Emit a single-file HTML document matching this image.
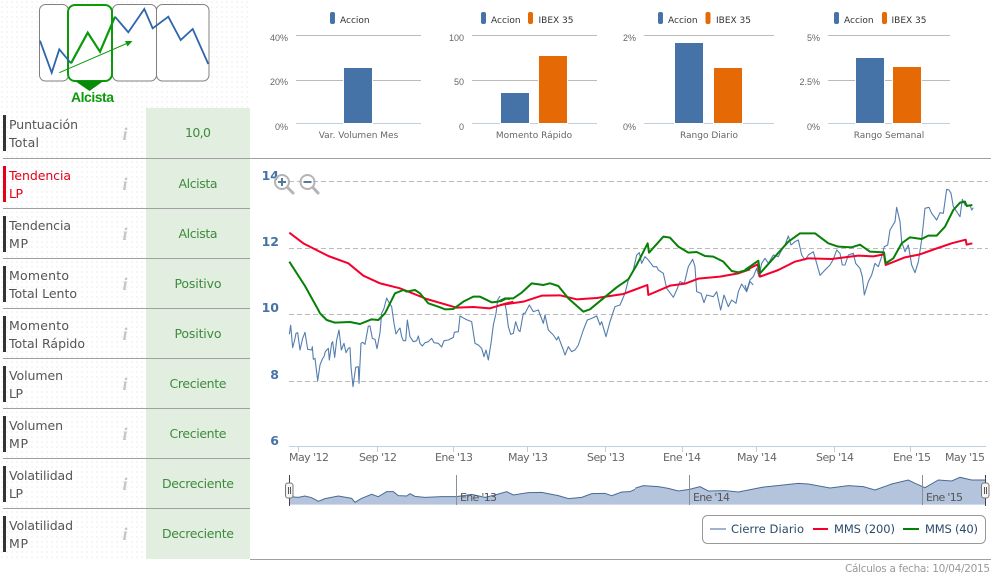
<!DOCTYPE html>
<html lang="es"><head><meta charset="utf-8"><title>Análisis</title>
<style>
html,body{margin:0;padding:0;background:#fff;width:995px;height:579px;overflow:hidden}
svg{display:block}
text{font-family:"DejaVu Sans",sans-serif}
.r{font-size:12.5px;fill:#555}
.v{font-size:12.5px;fill:#3d8a3d;text-anchor:middle}
.i{font-family:"Liberation Serif",serif;font-style:italic;font-weight:bold;font-size:18px;fill:#c6c6c6;text-anchor:middle}
.a{font-family:"Liberation Sans",sans-serif;font-size:9px;fill:#666;text-anchor:end}
.c{font-size:9px;fill:#666;text-anchor:middle}
.l{font-size:9px;fill:#333}
.y{font-size:12.5px;font-weight:bold;fill:#4572a7;text-anchor:end}
.x{font-size:11px;fill:#666}
.n{font-size:11px;fill:#555}
.g{stroke:#bbb;stroke-width:1;fill:none}
.d{stroke:#bbb;stroke-width:1;stroke-dasharray:5 3;fill:none}
.b{fill:#4572a7;stroke:#fff;stroke-width:1}
.o{fill:#e56a05;stroke:#fff;stroke-width:1}
.t{stroke:#c0d0e0;stroke-width:1;fill:none}
.zb{fill:none;stroke:#4572a7;stroke-width:1.1;vector-effect:non-scaling-stroke;stroke-linejoin:round;opacity:.92}
.zr{fill:none;stroke:#f5002d;stroke-width:2;vector-effect:non-scaling-stroke;stroke-linejoin:round}
.zg{fill:none;stroke:#078007;stroke-width:2;vector-effect:non-scaling-stroke;stroke-linejoin:round}
</style></head>
<body>
<svg width="995" height="579" viewBox="0 0 995 579" xmlns="http://www.w3.org/2000/svg">
<defs><pattern id="dots" width="5" height="5" patternUnits="userSpaceOnUse"><rect x="1" y="1" width="2" height="2" fill="#f6f6f6"/></pattern></defs>
<rect width="995" height="579" fill="#fff"/>
<rect x="0" y="0" width="250" height="559" fill="url(#dots)"/>

<!-- logo -->
<g fill="#fff" stroke="#808080" stroke-width="1">
<rect x="39.5" y="4.5" width="29" height="76.5" rx="6"/>
<rect x="112.5" y="4.5" width="44" height="76.5" rx="6"/>
<rect x="156.5" y="4.5" width="52.5" height="76.5" rx="6"/>
</g>
<rect x="68" y="5" width="44" height="76" rx="7" fill="#fff" stroke="#0a9a0a" stroke-width="2"/>
<polyline points="40,40.7 51.7,72.7 59.3,49.3 71,63.3" fill="none" stroke="#2e65ac" stroke-width="1.8"/>
<polyline points="115,16.7 128.3,32.3 144.3,9 152.7,28.3 168.3,16.7 180.7,40 192.7,29 208.3,64" fill="none" stroke="#2e65ac" stroke-width="1.8"/>
<polyline points="71,63.3 87.7,32.7 100,51.7 115,16.7" fill="none" stroke="#0a9a0a" stroke-width="2.2"/>
<line x1="59.3" y1="72.7" x2="129" y2="42.5" stroke="#0a9a0a" stroke-width="1"/>
<polygon points="132.5,41 125,41 127.5,46.5" fill="#0a9a0a"/>
<polygon points="75,81 103.500,81 89.500,91" fill="#0a8a0a"/>
<text x="71" y="102" style="font-family:'Liberation Sans',sans-serif;font-weight:bold;font-size:14px;fill:#0a9a0a" textLength="43">Alcista</text>

<!-- row rules -->
<g fill="#e2efe0">
<rect x="146" y="108" width="104" height="50"/><rect x="146" y="159" width="104" height="49"/><rect x="146" y="209" width="104" height="49"/><rect x="146" y="259" width="104" height="49"/><rect x="146" y="309" width="104" height="49"/><rect x="146" y="359" width="104" height="49"/><rect x="146" y="409" width="104" height="49"/><rect x="146" y="459" width="104" height="49"/><rect x="146" y="509" width="104" height="50"/>
</g>
<g stroke="#a0a0a0" stroke-width="1">
<line x1="3" y1="158.500" x2="991" y2="158.500"/>
<line x1="3" y1="208.500" x2="250" y2="208.500"/><line x1="3" y1="258.500" x2="250" y2="258.500"/><line x1="3" y1="308.500" x2="250" y2="308.500"/><line x1="3" y1="358.500" x2="250" y2="358.500"/><line x1="3" y1="408.500" x2="250" y2="408.500"/><line x1="3" y1="458.500" x2="250" y2="458.500"/><line x1="3" y1="508.500" x2="250" y2="508.500"/>
<line x1="250" y1="559.500" x2="991" y2="559.500"/>
</g>
<g fill="#333">
<rect x="3" y="115" width="3" height="36"/>
<rect x="3" y="166" width="3" height="36" fill="#e2001a"/>
<rect x="3" y="216" width="3" height="36"/><rect x="3" y="266" width="3" height="36"/><rect x="3" y="316" width="3" height="36"/><rect x="3" y="366" width="3" height="36"/><rect x="3" y="416" width="3" height="36"/><rect x="3" y="466" width="3" height="36"/><rect x="3" y="516" width="3" height="36"/>
</g>
<text class="r" x="9" y="129" textLength="69">Puntuación</text><text class="r" x="9" y="147" textLength="30">Total</text>
<text class="r" x="9" y="180" textLength="62" style="fill:#e2001a">Tendencia</text><text class="r" x="9" y="198" textLength="14" style="fill:#e2001a">LP</text>
<text class="r" x="9" y="230" textLength="62">Tendencia</text><text class="r" x="9" y="248" textLength="19">MP</text>
<text class="r" x="9" y="280" textLength="60">Momento</text><text class="r" x="9" y="298" textLength="68">Total Lento</text>
<text class="r" x="9" y="330" textLength="60">Momento</text><text class="r" x="9" y="348" textLength="76">Total Rápido</text>
<text class="r" x="9" y="380" textLength="54">Volumen</text><text class="r" x="9" y="398" textLength="14">LP</text>
<text class="r" x="9" y="430" textLength="54">Volumen</text><text class="r" x="9" y="448" textLength="19">MP</text>
<text class="r" x="9" y="480" textLength="64">Volatilidad</text><text class="r" x="9" y="498" textLength="14">LP</text>
<text class="r" x="9" y="530" textLength="64">Volatilidad</text><text class="r" x="9" y="548" textLength="19">MP</text>
<text class="i" x="125" y="140">i</text><text class="i" x="125" y="190">i</text><text class="i" x="125" y="240">i</text><text class="i" x="125" y="290">i</text><text class="i" x="125" y="340">i</text><text class="i" x="125" y="390">i</text><text class="i" x="125" y="440">i</text><text class="i" x="125" y="490">i</text><text class="i" x="125" y="540">i</text>
<text class="v" x="198" y="137" textLength="26">10,0</text>
<text class="v" x="198" y="188" textLength="39">Alcista</text>
<text class="v" x="198" y="238" textLength="39">Alcista</text>
<text class="v" x="198" y="288" textLength="47">Positivo</text>
<text class="v" x="198" y="338" textLength="47">Positivo</text>
<text class="v" x="198" y="388" textLength="57">Creciente</text>
<text class="v" x="198" y="438" textLength="57">Creciente</text>
<text class="v" x="198" y="488" textLength="72">Decreciente</text>
<text class="v" x="198" y="538" textLength="72">Decreciente</text>

<!-- bar chart 1 -->
<line class="g" x1="296" y1="35.500" x2="421" y2="35.500"/><line class="g" x1="296" y1="80.500" x2="421" y2="80.500"/><line class="t" x1="296" y1="123.500" x2="421" y2="123.500"/>
<rect class="b" x="343.500" y="67.500" width="29" height="56"/>
<text class="a" x="288" y="41">40%</text><text class="a" x="288" y="85">20%</text><text class="a" x="288" y="130">0%</text>
<rect x="330" y="12" width="5" height="12" rx="2" fill="#4572a7"/><text class="l" x="340" y="23">Accion</text>
<text class="c" x="358.500" y="138">Var. Volumen Mes</text>
<!-- bar chart 2 -->
<line class="g" x1="472" y1="35.500" x2="597" y2="35.500"/><line class="g" x1="472" y1="80.500" x2="597" y2="80.500"/><line class="t" x1="472" y1="123.500" x2="597" y2="123.500"/>
<rect class="b" x="500.500" y="92.500" width="29" height="31"/><rect class="o" x="538.500" y="55.500" width="29" height="68"/>
<text class="a" x="464" y="41">100</text><text class="a" x="464" y="85">50</text><text class="a" x="464" y="130">0</text>
<rect x="481" y="12" width="5" height="12" rx="2" fill="#4572a7"/><text class="l" x="491" y="23">Accion</text>
<rect x="528" y="12" width="5" height="12" rx="2" fill="#e56a05"/><text class="l" x="538.500" y="23">IBEX 35</text>
<text class="c" x="534" y="138">Momento Rápido</text>
<!-- bar chart 3 -->
<line class="g" x1="644" y1="35.500" x2="774" y2="35.500"/><line class="t" x1="644" y1="123.500" x2="774" y2="123.500"/>
<rect class="b" x="674.500" y="42.500" width="29" height="81"/><rect class="o" x="713.500" y="67.500" width="29" height="56"/>
<text class="a" x="636" y="41">2%</text><text class="a" x="636" y="130">0%</text>
<rect x="658" y="12" width="5" height="12" rx="2" fill="#4572a7"/><text class="l" x="668" y="23">Accion</text>
<rect x="705.500" y="12" width="5" height="12" rx="2" fill="#e56a05"/><text class="l" x="716" y="23">IBEX 35</text>
<text class="c" x="709" y="138">Rango Diario</text>
<!-- bar chart 4 -->
<line class="g" x1="828" y1="35.500" x2="950" y2="35.500"/><line class="g" x1="828" y1="80.500" x2="950" y2="80.500"/><line class="t" x1="828" y1="123.500" x2="950" y2="123.500"/>
<rect class="b" x="855.500" y="57.500" width="29" height="66"/><rect class="o" x="892.500" y="66.500" width="29" height="57"/>
<text class="a" x="820" y="41">5%</text><text class="a" x="820" y="85">2.5%</text><text class="a" x="820" y="130">0%</text>
<rect x="834" y="12" width="5" height="12" rx="2" fill="#4572a7"/><text class="l" x="844" y="23">Accion</text>
<rect x="882" y="12" width="5" height="12" rx="2" fill="#e56a05"/><text class="l" x="891.500" y="23">IBEX 35</text>
<text class="c" x="889" y="138">Rango Semanal</text>

<!-- main chart grid -->
<line class="d" x1="289" y1="181.500" x2="988" y2="181.500"/>
<line class="d" x1="289" y1="248.500" x2="988" y2="248.500"/>
<line class="d" x1="289" y1="314.500" x2="988" y2="314.500"/>
<line class="d" x1="289" y1="381.500" x2="988" y2="381.500"/>
<line class="t" x1="289" y1="446.500" x2="986" y2="446.500"/>
<g class="t"><line x1="298.500" y1="447" x2="298.500" y2="452"/><line x1="377.500" y1="447" x2="377.500" y2="452"/><line x1="453.500" y1="447" x2="453.500" y2="452"/><line x1="527.500" y1="447" x2="527.500" y2="452"/><line x1="605.500" y1="447" x2="605.500" y2="452"/><line x1="682.500" y1="447" x2="682.500" y2="452"/><line x1="756.500" y1="447" x2="756.500" y2="452"/><line x1="834.500" y1="447" x2="834.500" y2="452"/><line x1="910.500" y1="447" x2="910.500" y2="452"/></g>
<text class="y" x="279" y="180">14</text><text class="y" x="279" y="246">12</text><text class="y" x="279" y="312">10</text><text class="y" x="279" y="379">8</text><text class="y" x="279" y="445">6</text>
<text class="x" x="289" y="461" textLength="40">May '12</text>
<text class="x" x="359" y="461" textLength="38">Sep '12</text>
<text class="x" x="435" y="461" textLength="38">Ene '13</text>
<text class="x" x="508" y="461" textLength="40">May '13</text>
<text class="x" x="587" y="461" textLength="38">Sep '13</text>
<text class="x" x="663" y="461" textLength="38">Ene '14</text>
<text class="x" x="737" y="461" textLength="40">May '14</text>
<text class="x" x="816" y="461" textLength="38">Sep '14</text>
<text class="x" x="893" y="461" textLength="38">Ene '15</text>
<text class="x" x="945" y="461" textLength="40">May '15</text>

<!-- blue series -->
<g transform="translate(260,300) scale(.33333)"><polyline class="zb" points="88,103 92,76 98,143 104,120 108,100 113,98 120,150 128,115 135,97 143,148 155,150 157,140 160,178 165,175 173,242 180,195 188,175 192,170 196,155 205,145 208,180 215,130 218,125 224,172 230,120 237,90 244,150 252,130 258,158 265,145 270,143 273,200 279,260 287,202 295,200 297,250 303,130 308,127 315,133 325,78 330,78 337,115 345,118 351,146 360,98 365,40 372,25 380,-6 387,8 395,20 402,70 408,102 415,90 420,84 425,110 430,122 437,122 442,60 450,110 460,125 470,122 475,108 480,130 487,138 495,128 505,125 515,115 522,128 535,130 545,141 552,122 565,120 580,112 583,97 595,95 600,48 612,55 622,60 635,65 645,130 655,135 665,145 672,170 678,150 685,180 693,130 700,75 708,40 713,0 720,-12"/></g>
<g transform="translate(500,170) scale(.33333)"><polyline class="zb" points="0,405 15,400 20,430 25,470 32,493 40,490 47,455 55,480 60,485 70,430 75,430 88,405 100,425 115,420 130,460 135,435 145,480 160,495 170,510 175,500 190,540 195,555 205,530 215,545 225,540 235,525 240,510 250,480 262,450 275,445 290,438 300,465 305,455 318,500 330,455 345,410 360,405 375,370 385,330 400,300 410,255 418,248 425,280 435,260 445,270 460,290 470,290 475,300 490,310 500,355 520,382 530,360 540,335 553,340 565,290 578,268 585,290 590,365 603,370 612,398 620,375 640,380 650,365 662,420 672,375 685,410 695,390 708,400 715,365 725,342 740,365 750,335 760,345"/></g>
<g transform="translate(745,170) scale(.33333)"><polyline class="zb" points="0,345 5,362 15,330 25,320 35,295 42,320 50,280 60,265 70,280 85,255 100,260 110,240 120,225 130,198 138,225 150,215 160,210 170,255 180,270 190,255 205,245 215,280 225,316 240,300 255,285 265,268 275,240 285,250 292,285 300,285 310,255 325,250 332,280 345,295 352,320 358,375 370,335 380,315 390,280 400,290 410,260 418,230 428,225 435,180 450,155 455,112 465,155 470,215 480,245 490,225 500,285 510,308 520,275 530,210 540,115 552,112 560,130 575,150 585,128 595,130 605,58 612,60 618,70 625,110 635,125 645,140 652,88 660,105 675,105 680,120 685,113"/></g>
<!-- red series -->
<g transform="translate(260,160) scale(.33333)"><polyline class="zr" points="88,218 130,250 205,288 265,310 310,347 360,370 420,385 500,417 590,443 640,441 690,445 740,430 760,425"/></g>
<g transform="translate(500,170) scale(.33333)"><polyline class="zr" points="0,405 70,395 125,377 180,376 230,388 290,384 370,372 442,345 445,375 510,347 555,341 595,326 660,320 715,310 750,298"/></g>
<g transform="translate(745,170) scale(.33333)"><polyline class="zr" points="0,302 38,283 45,320 100,300 150,275 190,265 260,267 340,257 385,259 417,253 422,285 480,262 525,253 570,237 620,220 662,209 665,224 682,220"/></g>
<!-- green series -->
<g transform="translate(260,160) scale(.33333)"><polyline class="zg" points="88,305 135,378 175,450 180,460 200,480 225,488 270,486 300,492 335,478 355,480 375,460 385,440 405,400 430,390 440,395 465,390 480,400 505,430 540,442 555,448 580,447 610,425 640,410 660,410 695,427 715,425 735,415 750,417"/></g>
<g transform="translate(500,170) scale(.33333)"><polyline class="zg" points="0,395 20,385 40,385 65,368 95,340 130,345 150,340 175,348 205,385 250,425 270,418 310,385 350,352 385,328 410,285 443,220 447,248 490,200 510,203 535,230 565,248 590,246 615,258 640,260 670,275 695,303 715,307 750,297"/></g>
<g transform="translate(745,170) scale(.33333)"><polyline class="zg" points="0,300 40,272 45,310 130,215 165,190 210,190 250,220 280,230 320,232 345,224 375,245 417,247 422,280 445,265 470,220 495,202 530,207 550,197 575,197 600,170 625,120 645,98 660,95 665,108 682,105"/></g>

<!-- zoom icons -->
<g fill="none" stroke="#b4b4b4">
<circle cx="282" cy="182" r="7" stroke-width="2"/><line x1="287.500" y1="187.500" x2="293" y2="193" stroke-width="3" stroke-linecap="round"/>
<circle cx="307.500" cy="182" r="7" stroke-width="2"/><line x1="313" y1="187.500" x2="318" y2="193" stroke-width="3" stroke-linecap="round"/>
</g>
<g stroke="#557a9c" stroke-width="2"><line x1="278" y1="182" x2="286" y2="182"/><line x1="282" y1="178" x2="282" y2="186"/><line x1="303.500" y1="182" x2="311.500" y2="182"/></g>

<!-- navigator -->
<g transform="translate(275,440) scale(.33333)"><polygon fill="#b3c4dc" points="43,194 43,170 70,172 90,168 110,173 130,184 150,176 190,168 230,175 240,187 260,175 290,163 310,170 335,155 355,155 370,167 395,168 405,161 420,169 450,172 500,170 545,170 590,163 630,172 660,165 695,155 715,165 760,158 800,157 850,167 880,176 920,172 950,161 990,160 1010,167 1040,156 1065,155 1080,148 1080,194"/>
<polyline fill="none" stroke="#4a6a95" stroke-width="1" style="vector-effect:non-scaling-stroke" points="43,170 70,172 90,168 110,173 130,184 150,176 190,168 230,175 240,187 260,175 290,163 310,170 335,155 355,155 370,167 395,168 405,161 420,169 450,172 500,170 545,170 590,163 630,172 660,165 695,155 715,165 760,158 800,157 850,167 880,176 920,172 950,161 990,160 1010,167 1040,156 1065,155 1080,148"/></g>
<g transform="translate(635,440) scale(.33333)"><polygon fill="#b3c4dc" points="0,194 0,145 25,137 70,140 100,145 130,153 163,148 195,140 220,153 270,152 310,156 380,142 490,130 520,132 585,144 640,137 685,140 720,150 770,132 820,120 840,130 870,143 910,120 950,123 975,112 1010,120 1050,120 1050,194"/>
<polyline fill="none" stroke="#4a6a95" stroke-width="1" style="vector-effect:non-scaling-stroke" points="0,145 25,137 70,140 100,145 130,153 163,148 195,140 220,153 270,152 310,156 380,142 490,130 520,132 585,144 640,137 685,140 720,150 770,132 820,120 840,130 870,143 910,120 950,123 975,112 1010,120 1050,120"/></g>
<g stroke="#8a8f96" stroke-width="1"><line x1="456.500" y1="475" x2="456.500" y2="505"/><line x1="689.500" y1="475" x2="689.500" y2="505"/><line x1="922.500" y1="475" x2="922.500" y2="505"/></g>
<text class="n" x="460" y="501" textLength="37">Ene '13</text><text class="n" x="693" y="501" textLength="37">Ene '14</text><text class="n" x="926" y="501" textLength="37">Ene '15</text>
<g stroke="#444" stroke-width="1"><line x1="289.500" y1="475" x2="289.500" y2="506"/><line x1="985.500" y1="475" x2="985.500" y2="506"/></g>
<g fill="#f4f4f4" stroke="#777" stroke-width="1"><rect x="285.500" y="483" width="7.500" height="15" rx="2.500"/><rect x="981.500" y="483" width="7.500" height="15" rx="2.500"/></g>
<g stroke="#555" stroke-width="1"><line x1="288.500" y1="487" x2="288.500" y2="494"/><line x1="290.500" y1="487" x2="290.500" y2="494"/><line x1="984.500" y1="487" x2="984.500" y2="494"/><line x1="986.500" y1="487" x2="986.500" y2="494"/></g>

<!-- legend -->
<rect x="702.500" y="515.500" width="283" height="28" rx="5" fill="#fff" stroke="#999"/>
<line x1="710" y1="529" x2="726" y2="529" stroke="#9fb3d0" stroke-width="2"/>
<text x="731" y="533" style="font-size:11.5px;fill:#2a4a6a" textLength="73">Cierre Diario</text>
<line x1="813" y1="529" x2="828" y2="529" stroke="#f5002d" stroke-width="2"/>
<text x="834" y="533" style="font-size:11.5px;fill:#2a4a6a" textLength="61">MMS (200)</text>
<line x1="903" y1="529" x2="919" y2="529" stroke="#078007" stroke-width="2"/>
<text x="925" y="533" style="font-size:11.5px;fill:#2a4a6a" textLength="53">MMS (40)</text>
<text x="845" y="572" style="font-size:10.5px;fill:#999" textLength="145">Cálculos a fecha: 10/04/2015</text>
</svg>
</body></html>
